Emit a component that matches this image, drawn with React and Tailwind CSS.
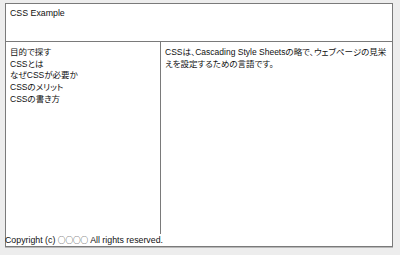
export default function App() {
  const links = ['目的で探す', 'CSSとは', 'なぜCSSが必要か', 'CSSのメリット', 'CSSの書き方'];

  return (
    <div
      className="w-[400px] h-[255px] bg-[#ededed] pt-[3px] pl-[5px] text-[#111] text-[8.5px] leading-[11.7px] [font-feature-settings:'palt']"
      style={{ fontFamily: '"Liberation Sans", "Noto Sans CJK JP", sans-serif' }}
    >
      <div className="w-[388px] h-[245px] bg-white border border-[#7a7a7a] border-b-0 flex flex-col">
        {/* header */}
        <header className="h-[38px] border-b border-[#7a7a7a] px-[4px] pt-[4px] text-[8.8px]">
          CSS Example
        </header>

        <div className="flex flex-1">
          <nav className="w-[155px] border-r border-[#7a7a7a] px-[4px] pt-[5px]">
            <ul>
              {links.map((l) => (
                <li key={l}>{l}</li>
              ))}
            </ul>
          </nav>
          <main className="flex-1 px-[4px] pt-[5px]">
            CSSは、Cascading Style Sheetsの略で、ウェブページの見栄えを設定するための言語です。
          </main>
        </div>

        <footer className="h-[12px] -ml-px text-[8.8px]">
          Copyright (c) <span className="text-[7.6px] font-['Noto_Sans_CJK_JP'] [font-feature-settings:normal]">○○○○</span> All rights reserved.
        </footer>
        <div className="h-[2px] -mx-px bg-[#7a7a7a] border-b border-[#b8b8b8]" />
      </div>
    </div>
  );
}
